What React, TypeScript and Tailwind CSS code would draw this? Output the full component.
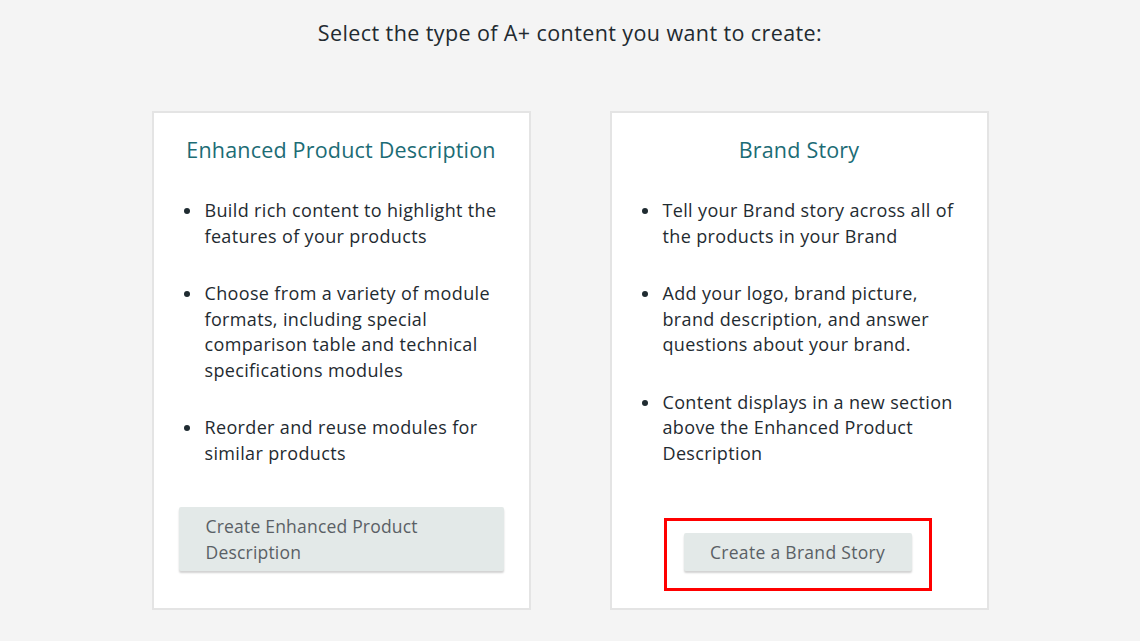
import React from "react";

const font = { fontFamily: '"Open Sans", "Noto Sans", sans-serif' };

function Bullets({ items }: { items: string[] }) {
  return (
    <ul className="mt-[33px] flex flex-col gap-[32px] pl-[26px]">
      {items.map((t) => (
        <li key={t} className="relative text-[18px] leading-[25.5px] tracking-[0.35px] text-[#1f2b31]">
          <span className="absolute left-[-21px] top-[10px] h-[6px] w-[6px] rounded-full bg-[#1f2b31]" />
          {t}
        </li>
      ))}
    </ul>
  );
}

export default function App() {
  return (
    <div className="flex h-[641px] w-full flex-col items-center bg-[#f4f4f4]" style={font}>
      <h1 className="mt-[19px] text-[21.5px] leading-[28px] tracking-[0.4px] text-[#222a30]">
        Select the type of A+ content you want to create:
      </h1>
      <div className="mt-[64px] flex gap-[79px]">
        <div className="flex h-[499px] w-[379px] flex-col border-2 border-[#e4e4e4] bg-white px-[25px] pt-[22px] pb-[37px]">
          <h2 className="text-center text-[21.5px] leading-[30px] tracking-[0.2px] text-[#1c6c75]">
            Enhanced Product Description
          </h2>
          <Bullets
            items={[
              "Build rich content to highlight the features of your products",
              "Choose from a variety of module formats, including special comparison table and technical specifications modules",
              "Reorder and reuse modules for similar products",
            ]}
          />
          <div className="mt-auto">
            <button className="h-[64px] w-full rounded-[2px] bg-[#e3e9e8] pl-[27px] pr-[20px] text-left text-[17.5px] leading-[26px] tracking-[0.2px] text-[#5a6065] shadow-[0_2px_2px_rgba(0,0,0,0.18)]">
              Create Enhanced Product
              <br />
              Description
            </button>
          </div>
        </div>
        <div className="flex h-[499px] w-[379px] flex-col border-2 border-[#e4e4e4] bg-white px-[25px] pt-[22px] pb-[17px]">
          <h2 className="text-center text-[21.5px] leading-[30px] tracking-[0.2px] text-[#1c6c75]">Brand Story</h2>
          <Bullets
            items={[
              "Tell your Brand story across all of the products in your Brand",
              "Add your logo, brand picture, brand description, and answer questions about your brand.",
              "Content displays in a new section above the Enhanced Product Description",
            ]}
          />
          <div className="mt-auto flex justify-center">
            <div className="ml-[-3px] border-[3px] border-[#ff0000] px-[17px] pt-[12px] pb-[17px]">
              <button className="h-[38px] w-[228px] rounded-[2px] bg-[#e3e9e8] text-center text-[17.5px] tracking-[0.3px] text-[#5a6065] shadow-[0_2px_2px_rgba(0,0,0,0.18)]">
                Create a Brand Story
              </button>
            </div>
          </div>
        </div>
      </div>
    </div>
  );
}
